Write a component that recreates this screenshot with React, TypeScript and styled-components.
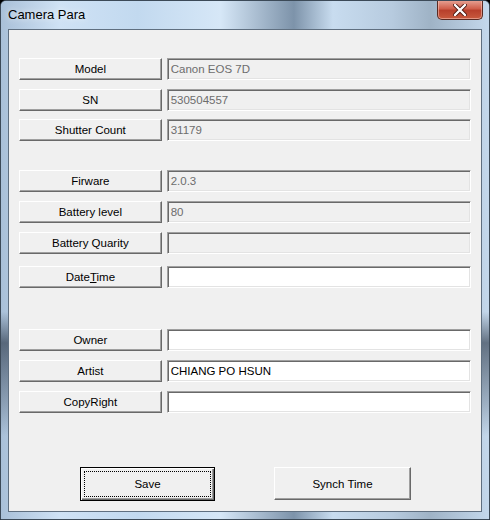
import styled, { createGlobalStyle } from "styled-components";

const GlobalStyle = createGlobalStyle`
  html, body {
    margin: 0;
    padding: 0;
    background: #000;
  }
  * {
    box-sizing: border-box;
  }
`;

const Window = styled.div`
  width: 490px;
  height: 520px;
  display: flex;
  flex-direction: column;
  border: 1px solid #3c4a58;
  border-radius: 6px 6px 0 0;
  overflow: hidden;
  background:
    linear-gradient(
      180deg,
      rgba(255, 255, 255, 0) 0%,
      rgba(255, 255, 255, 0) 60%,
      rgba(20, 30, 45, 0.55) 66%,
      rgba(20, 30, 45, 0.2) 78%,
      rgba(255, 255, 255, 0) 84%
    ),
    linear-gradient(
      90deg,
      #a9c0d8 0%,
      #cfe2f5 12%,
      #c2d9ef 28%,
      #d6e7f7 45%,
      #7d93aa 60%,
      #c8dcef 68%,
      #b7cbdf 80%,
      #9fb3c6 88%,
      #c4d8ec 100%
    );
  font-family: "Liberation Sans", Arial, sans-serif;
`;

const TitleBar = styled.div`
  height: 28px;
  display: flex;
  align-items: flex-start;
  justify-content: space-between;
  padding-left: 7px;
  background: linear-gradient(
    90deg,
    #a9c0d8 0%,
    #cfe2f5 12%,
    #c2d9ef 28%,
    #d6e7f7 45%,
    #7d93aa 60%,
    #c8dcef 68%,
    #b7cbdf 80%,
    #9fb3c6 88%,
    #c4d8ec 100%
  );
`;

const Title = styled.span`
  margin-top: 6px;
  font-size: 13px;
  color: #000;
  text-shadow: 0 0 6px rgba(255, 255, 255, 0.9);
`;

const CloseButton = styled.div`
  width: 46px;
  height: 20px;
  margin-right: 6px;
  margin-top: -1px;
  display: flex;
  align-items: center;
  justify-content: center;
  border: 1px solid #5a2a22;
  border-top: none;
  border-radius: 0 0 5px 5px;
  background: linear-gradient(180deg, #e8a698 0%, #d0604c 45%, #b8402c 55%, #c85a3e 100%);
  box-shadow: inset 0 0 0 1px rgba(255, 210, 200, 0.5);
`;

const Client = styled.div`
  flex: 1;
  margin: 0 7px 7px 7px;
  border: 1px solid #5f6f80;
  background: #f0f0f0;
  padding: 28px 10px 0 10px;
  display: flex;
  flex-direction: column;
`;

const Row = styled.div<{ $top: number }>`
  display: flex;
  gap: 5px;
  margin-top: ${({ $top }) => $top}px;
`;

const LabelButton = styled.div`
  width: 143px;
  height: 22px;
  display: flex;
  align-items: center;
  justify-content: center;
  background: #f0f0f0;
  border: 1px solid;
  border-color: #fff #696969 #696969 #fff;
  box-shadow: inset -1px -1px 0 #a0a0a0;
  font-size: 11.5px;
  color: #000;
`;

const Field = styled.div<{ $enabled?: boolean }>`
  width: 305px;
  height: 22px;
  display: flex;
  align-items: center;
  padding-left: 3px;
  background: ${({ $enabled }) => ($enabled ? "#fff" : "#f0f0f0")};
  border: 1px solid;
  border-color: #a0a0a0 #fff #fff #a0a0a0;
  box-shadow: inset 1px 1px 0 #696969, inset -1px -1px 0 #e3e3e3;
  font-size: 11.5px;
  color: ${({ $enabled }) => ($enabled ? "#000" : "#6d6d6d")};
  white-space: nowrap;
`;

const ButtonBar = styled.div`
  display: flex;
  align-items: flex-start;
  margin-top: 54px;
  padding-left: 61px;
  gap: 59px;
`;

const PushButton = styled.div<{ $default?: boolean }>`
  position: relative;
  width: ${({ $default }) => ($default ? 135 : 137)}px;
  height: ${({ $default }) => ($default ? 34 : 33)}px;
  display: flex;
  align-items: center;
  justify-content: center;
  background: #f0f0f0;
  font-size: 11.5px;
  color: #000;
  border: 1px solid;
  border-color: ${({ $default }) =>
    $default ? "#000" : "#fff #696969 #696969 #fff"};
  box-shadow: ${({ $default }) =>
    $default
      ? "inset 1px 1px 0 #fff, inset -1px -1px 0 #696969, inset -2px -2px 0 #a0a0a0"
      : "inset -1px -1px 0 #a0a0a0"};
`;

const FocusRing = styled.div`
  position: absolute;
  inset: 3px;
  border: 1px dotted #000;
`;

type Item = { label: React.ReactNode; value?: string; enabled?: boolean; top: number };

const items: Item[] = [
  { label: "Model", value: "Canon EOS 7D", top: 0 },
  { label: "SN", value: "530504557", top: 9 },
  { label: "Shutter Count", value: "31179", top: 8 },
  { label: "Firware", value: "2.0.3", top: 29 },
  { label: "Battery level", value: "80", top: 9 },
  { label: "Battery Quarity", value: "", top: 9 },
  {
    label: (
      <span>
        Date<u>T</u>ime
      </span>
    ),
    enabled: true,
    top: 12,
  },
  { label: "Owner", enabled: true, top: 41 },
  { label: "Artist", value: "CHIANG PO HSUN", enabled: true, top: 9 },
  { label: "CopyRight", enabled: true, top: 9 },
];

function App() {
  return (
    <>
      <GlobalStyle />
      <Window>
        <TitleBar>
          <Title>Camera Para</Title>
          <CloseButton>
            <svg width="14" height="12" viewBox="0 0 14 12">
              <path
                d="M2 1 L12 11 M12 1 L2 11"
                stroke="#4a1810"
                strokeWidth="4"
                strokeLinecap="round"
              />
              <path
                d="M2 1 L12 11 M12 1 L2 11"
                stroke="#fff"
                strokeWidth="2.4"
                strokeLinecap="round"
              />
            </svg>
          </CloseButton>
        </TitleBar>
        <Client>
          {items.map((it, i) => (
            <Row key={i} $top={it.top}>
              <LabelButton>{it.label}</LabelButton>
              <Field $enabled={it.enabled}>{it.value}</Field>
            </Row>
          ))}
          <ButtonBar>
            <PushButton $default>
              <FocusRing />
              Save
            </PushButton>
            <PushButton>Synch Time</PushButton>
          </ButtonBar>
        </Client>
      </Window>
    </>
  );
}

export default App;
